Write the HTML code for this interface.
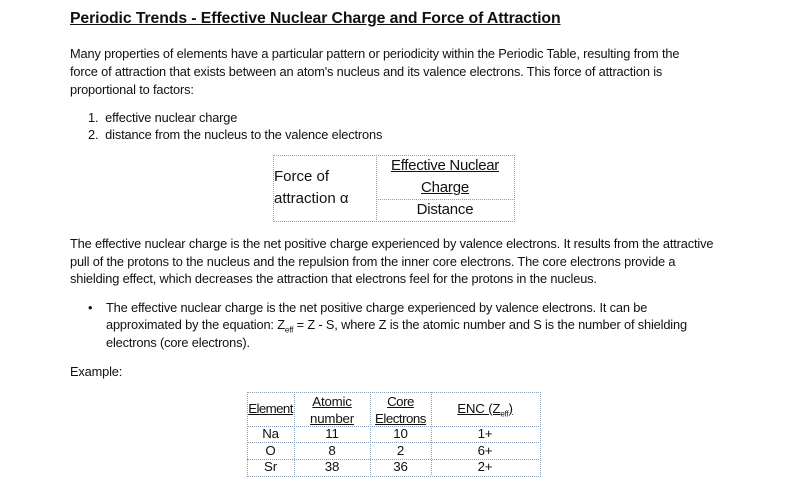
<!DOCTYPE html>
<html><head><style>
body{margin:0;width:788px;height:492px;background:#fff;font-family:"Liberation Sans",sans-serif;color:#111;position:relative;overflow:hidden}
.t{position:absolute;white-space:nowrap;font-size:12.8px;letter-spacing:-0.15px}
.c{position:absolute;text-align:center;font-size:13.3px;letter-spacing:-0.2px}
.b{position:absolute;border:1px dotted #8aa0b8}
</style></head><body>
<div class="t" style="left:70px;top:10px;font-size:15.8px;font-weight:bold;text-decoration:underline;letter-spacing:-0.1px">Periodic Trends - Effective Nuclear Charge and Force of Attraction</div>
<div class="t" style="left:70px;top:46px">Many properties of elements have a particular pattern or periodicity within the Periodic Table, resulting from the</div>
<div class="t" style="left:70px;top:64px">force of attraction that exists between an atom's nucleus and its valence electrons. This force of attraction is</div>
<div class="t" style="left:70px;top:82px">proportional to factors:</div>
<div class="t" style="left:88px;top:110px">1.&nbsp; effective nuclear charge</div>
<div class="t" style="left:88px;top:127px">2.&nbsp; distance from the nucleus to the valence electrons</div>

<div class="b" style="left:273px;top:155px;width:240px;height:65px"></div>
<div class="b" style="left:376px;top:155px;width:0;height:65px;border-width:0 0 0 1px"></div>
<div class="b" style="left:376px;top:199px;width:137px;height:0;border-width:1px 0 0 0"></div>
<div class="t" style="left:274px;top:168px;font-size:15px;letter-spacing:0">Force of</div>
<div class="t" style="left:274px;top:190px;font-size:15px;letter-spacing:0">attraction α</div>
<div class="c" style="left:377px;top:157px;width:136px;font-size:15px;text-decoration:underline;letter-spacing:-0.3px">Effective Nuclear</div>
<div class="c" style="left:377px;top:179px;width:136px;font-size:15px;text-decoration:underline">Charge</div>
<div class="c" style="left:377px;top:201px;width:136px;font-size:15px">Distance</div>

<div class="t" style="left:70px;top:236px">The effective nuclear charge is the net positive charge experienced by valence electrons. It results from the attractive</div>
<div class="t" style="left:70px;top:254px">pull of the protons to the nucleus and the repulsion from the inner core electrons. The core electrons provide a</div>
<div class="t" style="left:70px;top:271px">shielding effect, which decreases the attraction that electrons feel for the protons in the nucleus.</div>
<div class="t" style="left:88px;top:300px">•</div>
<div class="t" style="left:106px;top:300px">The effective nuclear charge is the net positive charge experienced by valence electrons. It can be</div>
<div class="t" style="left:106px;top:317px">approximated by the equation: Z<sub style="font-size:8px">eff</sub> = Z - S, where Z is the atomic number and S is the number of shielding</div>
<div class="t" style="left:106px;top:335px">electrons (core electrons).</div>
<div class="t" style="left:70px;top:364px">Example:</div>

<div class="b" style="left:247px;top:392px;width:292px;height:83px"></div>
<div class="b" style="left:294px;top:392px;width:0;height:83px;border-width:0 0 0 1px"></div>
<div class="b" style="left:370px;top:392px;width:0;height:83px;border-width:0 0 0 1px"></div>
<div class="b" style="left:431px;top:392px;width:0;height:83px;border-width:0 0 0 1px"></div>
<div class="b" style="left:247px;top:426px;width:292px;height:0;border-width:1px 0 0 0"></div>
<div class="b" style="left:247px;top:442px;width:292px;height:0;border-width:1px 0 0 0"></div>
<div class="b" style="left:247px;top:459px;width:292px;height:0;border-width:1px 0 0 0"></div>
<div class="c" style="left:245px;top:401px;width:51px;text-decoration:underline;letter-spacing:-0.6px">Element</div>
<div class="c" style="left:294px;top:393px;width:76px;text-decoration:underline;line-height:17px">Atomic<br>number</div>
<div class="c" style="left:370px;top:393px;width:61px;text-decoration:underline;line-height:17px;letter-spacing:-0.5px">Core<br>Electrons</div>
<div class="c" style="left:431px;top:401px;width:108px;text-decoration:underline">ENC (Z<sub style="font-size:8px">eff</sub>)</div>
<div class="c" style="left:247px;top:426px;width:47px">Na</div><div class="c" style="left:294px;top:426px;width:76px">11</div><div class="c" style="left:370px;top:426px;width:61px">10</div><div class="c" style="left:431px;top:426px;width:108px">1+</div>
<div class="c" style="left:247px;top:443px;width:47px">O</div><div class="c" style="left:294px;top:443px;width:76px">8</div><div class="c" style="left:370px;top:443px;width:61px">2</div><div class="c" style="left:431px;top:443px;width:108px">6+</div>
<div class="c" style="left:247px;top:459px;width:47px">Sr</div><div class="c" style="left:294px;top:459px;width:76px">38</div><div class="c" style="left:370px;top:459px;width:61px">36</div><div class="c" style="left:431px;top:459px;width:108px">2+</div>
</body></html>
